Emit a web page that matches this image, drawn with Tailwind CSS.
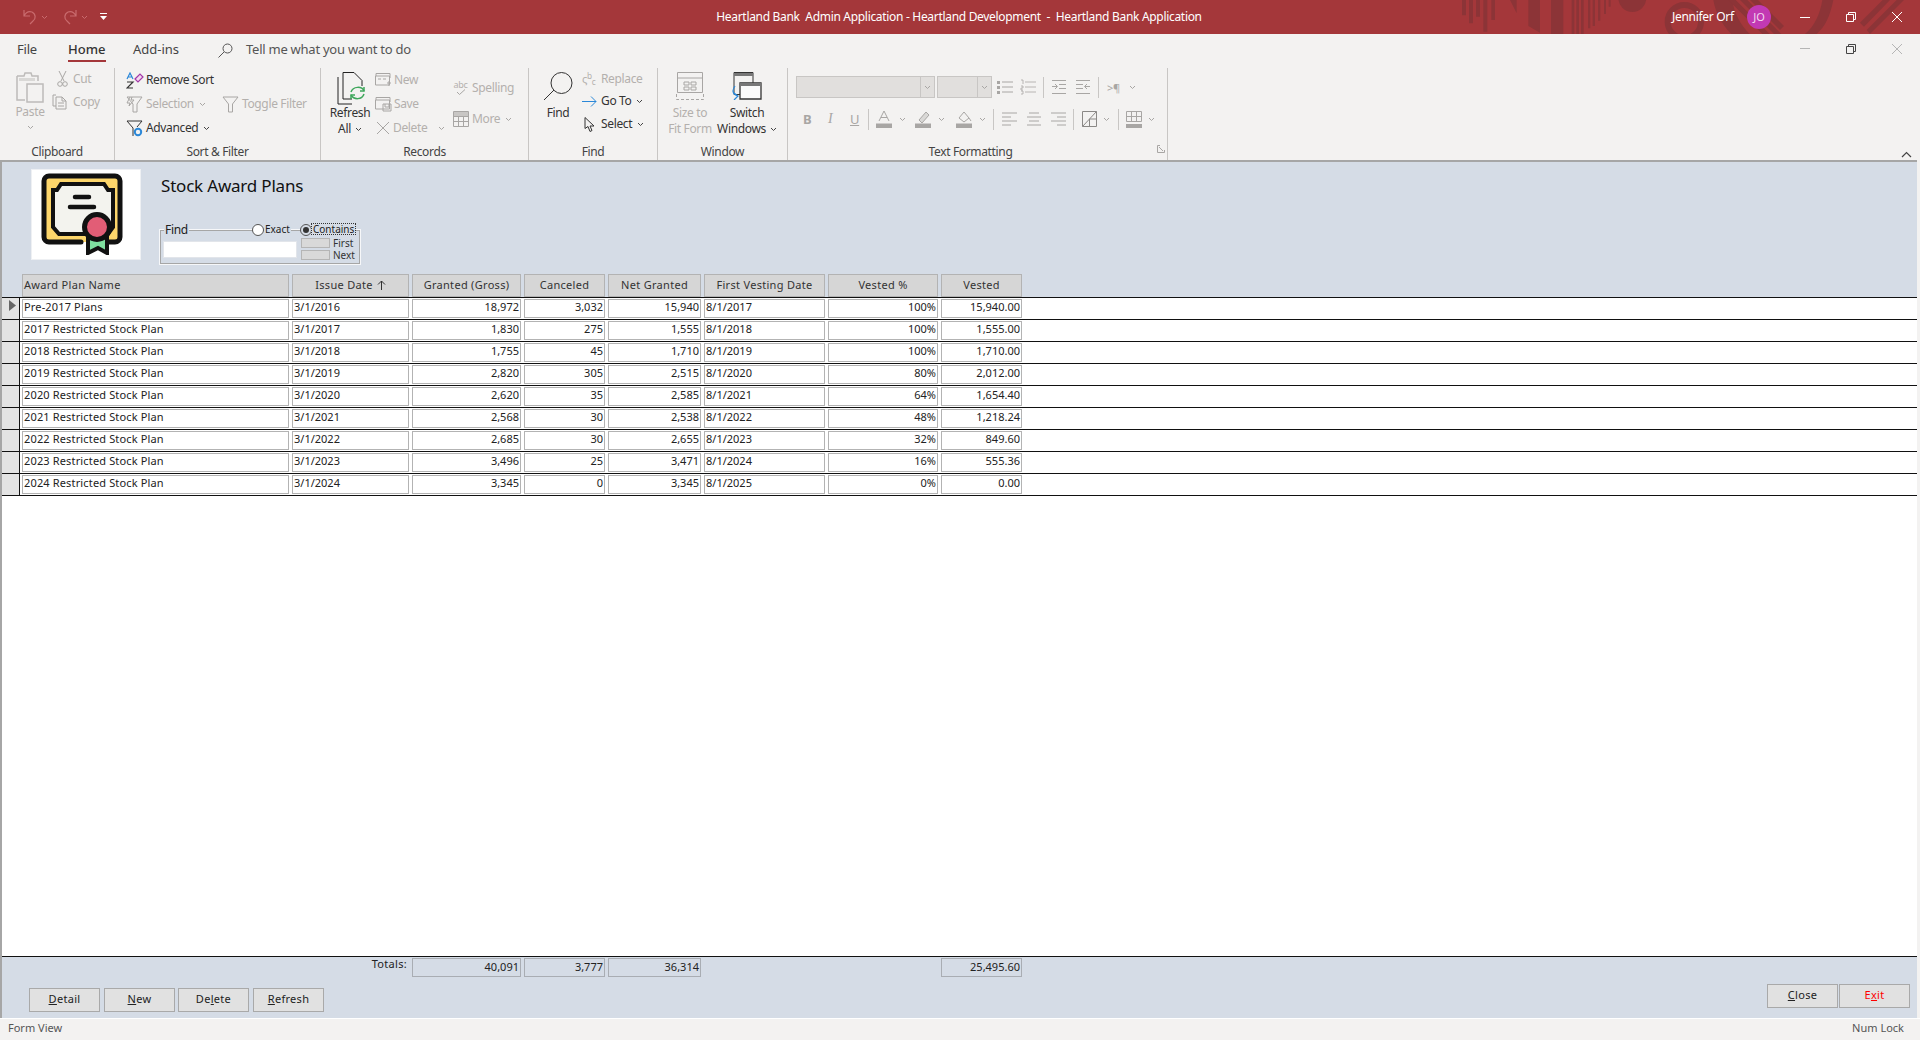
<!DOCTYPE html>
<html><head><meta charset="utf-8"><script src="https://cdn.jsdelivr.net/npm/@tailwindcss/browser@4"></script></head>
<body class="m-0 h-[1040px] w-[1920px] overflow-hidden bg-[#f3f2f1] font-['Noto_Sans','Open_Sans',sans-serif] text-[12px] text-[#444]">
<div class="flex h-[1040px] flex-col">

<!-- title bar -->
<header class="relative flex h-[34px] shrink-0 items-center bg-[#a4373a] text-white">
  <svg class="absolute left-[1400px] top-0" width="520" height="34" viewBox="0 0 1560 102" fill="#8c3437">
    <path d="M186 0h12v46h-12zM207 0h12v70h-12zM228 0h12v50h-12zM250 0h12v95h-12zM274 0h11v60h-11zM330 0h20v40zM385 0h35v98l-35-20zM453 0h37v102h-37zM515 0h8v102h-8zM529 0h8v102h-8zM543 0h8v102h-8zM564 0h7v85h-7zM578 0h7v78h-7zM594 0h7v62h-7zM612 0h6v42h-6zM626 0h6v20h-6z"/>
    <circle cx="697" cy="-6" r="42"/>
    <circle cx="853" cy="65" r="50" fill="none" stroke="#8c3437" stroke-width="18"/>
    <path d="M940 0h360c-10 50-25 80-50 102h-35c30-25 45-60 52-102h-270c5 40 25 75 52 102h-55c-30-30-48-65-54-102z"/>
    <path d="M985 0l102 102h22L1007 0zM1020 0l102 102h22L1042 0zM1050 0l90 90 12-12L1074 0zM1380 68l68-68h22l-78 80zM1400 90l90-90h22l-102 102z"/>
  </svg>
  <div class="relative flex w-[560px] items-center pl-[22px]">
    <svg width="16" height="16" viewBox="0 0 16 16" fill="none" stroke="#c96b6e" stroke-width="1.2"><path d="M2 1v6h6M2 7c2-4 5-5 8-4 4 2 4 7 1 9l-3 3"/></svg>
    <svg class="ml-[3px]" width="7" height="5" viewBox="0 0 7 5" fill="none" stroke="#c96b6e"><path d="M1 1l2.500 2.500L6 1"/></svg>
    <svg class="ml-[14px]" width="16" height="16" viewBox="0 0 16 16" fill="none" stroke="#c96b6e" stroke-width="1.2"><path d="M14 1v6H8M14 7c-2-4-5-5-8-4C2 5 2 10 5 12l3 3"/></svg>
    <svg class="ml-[3px]" width="7" height="5" viewBox="0 0 7 5" fill="none" stroke="#c96b6e"><path d="M1 1l2.500 2.500L6 1"/></svg>
    <svg class="ml-[12px]" width="8" height="8" viewBox="0 0 8 8" fill="#fff"><path d="M0 0h7v1H0zM0 3h7L3.500 7z"/></svg>
  </div>
  <div class="relative ml-[156px] w-[486px] whitespace-pre text-center text-[12px] tracking-[-0.31px]">Heartland Bank  Admin Application - Heartland Development  -  Heartland Bank Application</div>
  <div class="relative ml-[470px] w-[64px] whitespace-nowrap text-[12px] tracking-[-0.3px]">Jennifer Orf</div>
  <div class="relative ml-[11px] flex h-[24px] w-[24px] items-center justify-center rounded-full bg-[#c239b3] text-[11px] text-[#f3d9ef]">JO</div>
  <div class="relative ml-[29px] flex items-center">
    <svg width="10" height="10" viewBox="0 0 10 10" stroke="#fff"><path d="M0 5.500h10"/></svg>
    <svg class="ml-[36px]" width="10" height="10" viewBox="0 0 10 10" fill="none" stroke="#fff"><path d="M.5 2.500h7v7h-7zM2.500 2.500V.5h7v7H7.500"/></svg>
    <svg class="ml-[36px]" width="10" height="10" viewBox="0 0 10 10" fill="none" stroke="#fff"><path d="M0 0l10 10M10 0L0 10"/></svg>
  </div>
</header>

<!-- tabs -->
<nav class="flex h-[34px] shrink-0 items-start pt-[6px] text-[13px] text-[#444]">
  <span class="ml-[17px] w-[19px] tracking-[-0.2px]">File</span>
  <span class="relative ml-[32px] w-[38px] font-medium text-[#333]">Home<span class="absolute left-0 top-[20px] h-[2px] w-[38px] bg-[#a4373a]"></span></span>
  <span class="ml-[27px] w-[47px]">Add-ins</span>
  <svg class="ml-[38px] mt-[3px]" width="15" height="15" viewBox="0 0 15 15" fill="none" stroke="#555"><circle cx="9.500" cy="5.500" r="4.500"/><path d="M6 9l-5.500 5.500"/></svg>
  <span class="ml-[13px] whitespace-nowrap tracking-[-0.25px] text-[#555]">Tell me what you want to do</span>
  <div class="ml-auto mr-[18px] mt-[4px] flex items-center">
    <svg width="10" height="10" viewBox="0 0 10 10"><path d="M0 4.500h10" stroke="#b5b5b5"/></svg>
    <svg class="ml-[36px]" width="10" height="10" viewBox="0 0 10 10" fill="none" stroke="#444"><path d="M.5 2.500h7v7h-7zM2.500 2.500V.5h7v7H7.500"/></svg>
    <svg class="ml-[36px]" width="10" height="10" viewBox="0 0 10 10" fill="none" stroke="#b5b5b5"><path d="M0 0l10 10M10 0L0 10"/></svg>
  </div>
</nav>

<!-- ribbon -->
<section class="relative flex h-[92px] shrink-0 items-stretch text-[12px] leading-none tracking-[-0.35px]">
  <!-- Clipboard -->
  <div class="flex w-[115px] flex-col border-r border-[#c8c6c4]">
    <div class="flex h-[76px]">
      <div class="ml-[15px] flex w-[30px] flex-col items-center pt-[4px] text-[#b3b0ad]">
        <svg width="29" height="31" viewBox="0 0 29 31" fill="none" stroke="#bdbbb9"><path d="M1 4h7l1-3h6l1 3h6v5M1 4v24h8" stroke-width="1.500"/><path d="M11 12h16v18H11z" fill="#f3f2f1" stroke-width="1.500"/><path d="M3 6h16v3H3z" fill="#d9d8d6" stroke="none"/></svg>
        <span class="mt-[3px]">Paste</span>
        <svg class="mt-[7px]" width="7" height="5" viewBox="0 0 7 5" fill="none" stroke="#a8a6a4"><path d="M1 1l2.500 2.500L6 1"/></svg>
      </div>
      <div class="ml-[7px] flex flex-col text-[#b3b0ad]">
        <div class="flex h-[22px] items-center"><svg class="ml-[5px]" width="11" height="16" viewBox="0 0 11 16" fill="none" stroke="#a8a6a4"><path d="M2 0l5 10M9 0L4 10"/><circle cx="3" cy="13" r="2.300"/><circle cx="8" cy="13" r="2.300"/></svg><span class="ml-[5px]">Cut</span></div>
        <div class="mt-[1px] flex h-[22px] items-center"><svg width="16" height="16" viewBox="0 0 16 16" fill="none" stroke="#a8a6a4"><path d="M4 1H1v11h3M4 3h6l4 4v8H4zM10 3v4h4M6 9h6M6 12h6"/></svg><span class="ml-[5px]">Copy</span></div>
      </div>
    </div>
    <div class="mt-[2px] text-center text-[#444]">Clipboard</div>
  </div>
  <!-- Sort & Filter -->
  <div class="flex w-[206px] flex-col border-r border-[#c8c6c4]">
    <div class="flex h-[76px] flex-col pl-[11px]">
      <div class="flex h-[24px] items-center text-[#333]"><svg width="18" height="17" viewBox="0 0 18 17"><path d="M1 7l3-6 3 6M2 5h4" fill="none" stroke="#2b88d8" stroke-width="1.200"/><path d="M1 10h6l-6 6h6" fill="none" stroke="#333" stroke-width="1.200"/><path d="M9 7l5-5 3 3-5 5z" fill="#f3d9ef" stroke="#a238a8" stroke-width="1.200"/></svg><span class="ml-[2px] whitespace-nowrap">Remove Sort</span></div>
      <div class="flex h-[24px] items-center whitespace-nowrap text-[#b3b0ad]"><svg width="17" height="17" viewBox="0 0 17 17" fill="none" stroke="#a8a6a4"><path d="M1 1h15l-5 7v8H7V8zM4 1L1 7h3l-1 3 5-6H5l1-3"/></svg><span class="ml-[3px]">Selection</span><svg class="ml-[5px]" width="7" height="5" viewBox="0 0 7 5" fill="none" stroke="#a8a6a4"><path d="M1 1l2.500 2.500L6 1"/></svg>
        <svg class="ml-[16px]" width="17" height="17" viewBox="0 0 17 17" fill="none" stroke="#a8a6a4"><path d="M1 1h15l-5.500 7v8h-4V8z"/></svg><span class="ml-[3px]">Toggle Filter</span></div>
      <div class="flex h-[24px] items-center text-[#333]"><svg width="17" height="17" viewBox="0 0 17 17" fill="none" stroke="#333"><path d="M1 1h15l-5 6M7 16V8L1 1"/><circle cx="12" cy="12" r="3.200" stroke="#2b88d8" stroke-width="2"/></svg><span class="ml-[3px]">Advanced</span><svg class="ml-[5px]" width="7" height="5" viewBox="0 0 7 5" fill="none" stroke="#444"><path d="M1 1l2.500 2.500L6 1"/></svg></div>
    </div>
    <div class="mt-[2px] text-center text-[#444]">Sort &amp; Filter</div>
  </div>
  <!-- Records -->
  <div class="flex w-[208px] flex-col border-r border-[#c8c6c4]">
    <div class="flex h-[76px]">
      <div class="ml-[9px] flex w-[40px] flex-col items-center pt-[4px] text-[#333]">
        <svg class="ml-[4px]" width="30" height="33" viewBox="0 0 30 33" fill="none"><path d="M6 .5h11l8 8V14M6 .5V27h9M1 5v27h14" stroke="#222" /><path d="M14 20c2-6 11-6 13-1M27 22c-2 6-10 6-13 1" stroke="#3fa75c" stroke-width="1.500"/><path d="M27 15v4h-4M14 27v-4h4" stroke="#3fa75c" stroke-width="1.500"/></svg>
        <span class="mt-[2px]">Refresh</span>
        <span class="mt-[4px] flex items-center">All<svg class="ml-[4px]" width="7" height="5" viewBox="0 0 7 5" fill="none" stroke="#444"><path d="M1 1l2.500 2.500L6 1"/></svg></span>
      </div>
      <div class="ml-[5px] flex w-[73px] flex-col text-[#b3b0ad]">
        <div class="flex h-[24px] items-center"><svg width="17" height="15" viewBox="0 0 17 15" fill="none" stroke="#a8a6a4"><path d="M1 3V.5h14V5M.5 3h14v9H.5zM3 6h3M8 6h3M12 10h4M14 8v5"/></svg><span class="ml-[2px]">New</span></div>
        <div class="flex h-[24px] items-center"><svg width="17" height="15" viewBox="0 0 17 15" fill="none" stroke="#a8a6a4"><path d="M1 3V.5h14V5M.5 3h14v9H.5zM8 7h8v7H8zM10 7v3h4V7"/></svg><span class="ml-[2px]">Save</span></div>
        <div class="flex h-[24px] items-center"><svg class="ml-[1px]" width="14" height="14" viewBox="0 0 14 14" fill="none" stroke="#a8a6a4"><path d="M1 1l12 12M13 1L1 13"/></svg><span class="ml-[3px]">Delete</span><svg class="ml-[11px]" width="7" height="5" viewBox="0 0 7 5" fill="none" stroke="#a8a6a4"><path d="M1 1l2.500 2.500L6 1"/></svg></div>
      </div>
      <div class="ml-[5px] flex flex-col pt-[7px] text-[#b3b0ad]">
        <div class="flex h-[26px] items-center"><span class="flex w-[15px] flex-col items-center text-[9px] leading-[8px]">abc<svg width="10" height="6" viewBox="0 0 10 6" fill="none" stroke="#a8a6a4"><path d="M1 3l2.500 2.500L9 .5"/></svg></span><span class="ml-[4px]">Spelling</span></div>
        <div class="mt-[6px] flex h-[24px] items-center"><svg width="16" height="16" viewBox="0 0 16 16" fill="#f3f2f1" stroke="#a8a6a4"><path d="M.5.500h15v15H.5zM.5 5.500h15M.5 10.500h15M5.500 5.500v10M10.500 5.500v10"/><path d="M1 1h14v4H1z" fill="#c8c6c4" stroke="none"/></svg><span class="ml-[3px]">More</span><svg class="ml-[5px]" width="7" height="5" viewBox="0 0 7 5" fill="none" stroke="#a8a6a4"><path d="M1 1l2.500 2.500L6 1"/></svg></div>
      </div>
    </div>
    <div class="mt-[2px] text-center text-[#444]">Records</div>
  </div>
  <!-- Find -->
  <div class="flex w-[129px] flex-col border-r border-[#c8c6c4]">
    <div class="flex h-[76px]">
      <div class="ml-[14px] flex w-[30px] flex-col items-center pt-[4px] text-[#333]">
        <svg width="30" height="29" viewBox="0 0 30 29" fill="none" stroke="#333"><circle cx="18.500" cy="11" r="10.500"/><path d="M11 18L1 28"/></svg>
        <span class="mt-[6px]">Find</span>
      </div>
      <div class="ml-[9px] flex flex-col">
        <div class="flex h-[22px] items-center text-[#b3b0ad]"><span class="w-[15px] text-[11px] leading-[8px]">ς<sup>b</sup><sub>c</sub></span><span class="ml-[4px]">Replace</span></div>
        <div class="flex h-[22px] items-center text-[#333]"><svg width="15" height="11" viewBox="0 0 15 11" fill="none" stroke="#2b88d8"><path d="M0 5.500h14M9 .5l5 5-5 5"/></svg><span class="ml-[4px]">Go To</span><svg class="ml-[5px]" width="7" height="5" viewBox="0 0 7 5" fill="none" stroke="#444"><path d="M1 1l2.500 2.500L6 1"/></svg></div>
        <div class="flex h-[24px] items-center text-[#333]"><svg class="ml-[2px]" width="11" height="15" viewBox="0 0 11 15" fill="#f3f2f1" stroke="#333"><path d="M1 .5v11l3-2 2 5 2-1-2-4.500h4z"/></svg><span class="ml-[6px]">Select</span><svg class="ml-[5px]" width="7" height="5" viewBox="0 0 7 5" fill="none" stroke="#444"><path d="M1 1l2.500 2.500L6 1"/></svg></div>
      </div>
    </div>
    <div class="mt-[2px] text-center text-[#444]">Find</div>
  </div>
  <!-- Window -->
  <div class="flex w-[130px] flex-col border-r border-[#c8c6c4]">
    <div class="flex h-[76px] pt-[4px]">
      <div class="ml-[9px] flex w-[46px] flex-col items-center text-[#b3b0ad]">
        <svg width="28" height="28" viewBox="0 0 28 28" fill="none" stroke="#a8a6a4"><path d="M1.500 .5h25v20h-25z"/><path d="M1.500 6h25" /><path d="M8 10h5v3H8zM15 10h5v3h-5zM8 15h5v3H8zM15 15h5v3h-5z"/><path d="M.5 22v5.500h27V22" stroke-dasharray="3 2"/></svg>
        <span class="mt-[7px] whitespace-nowrap">Size to</span>
        <span class="mt-[4px] whitespace-nowrap">Fit Form</span>
      </div>
      <div class="ml-[5px] flex w-[58px] flex-col items-center text-[#333]">
        <svg width="31" height="28" viewBox="0 0 31 28" fill="none"><path d="M2 .5h19v22H2z" stroke="#333"/><path d="M2 1h19v3H2z" fill="#777"/><path d="M8 11h21v16H8z" fill="#fafafa" stroke="#333" stroke-width="1.300"/><path d="M8 11h21v3H8z" fill="#777"/><path d="M3 14c-3 4-3 8 3 10M2 21l4 3-4 4" stroke="#2b88d8" stroke-width="1.200"/></svg>
        <span class="mt-[7px]">Switch</span>
        <span class="mt-[4px] flex items-center whitespace-nowrap">Windows<svg class="ml-[4px]" width="7" height="5" viewBox="0 0 7 5" fill="none" stroke="#444"><path d="M1 1l2.500 2.500L6 1"/></svg></span>
      </div>
    </div>
    <div class="mt-[2px] text-center text-[#444]">Window</div>
  </div>
  <!-- Text formatting -->
  <div class="relative flex w-[380px] flex-col border-r border-[#c8c6c4]">
    <div class="flex h-[76px] flex-col pl-[8px] pt-[8px]">
      <div class="flex h-[22px] items-center">
        <div class="flex h-[22px] w-[139px] justify-end border border-[#c8c6c4] bg-[#e1dfdd]"><span class="flex w-[14px] items-center justify-center border-l border-[#c8c6c4]"><svg width="7" height="5" viewBox="0 0 7 5" fill="none" stroke="#a8a6a4"><path d="M1 1l2.500 2.500L6 1"/></svg></span></div>
        <div class="ml-[2px] flex h-[22px] w-[55px] justify-end border border-[#c8c6c4] bg-[#e1dfdd]"><span class="flex w-[14px] items-center justify-center border-l border-[#c8c6c4]"><svg width="7" height="5" viewBox="0 0 7 5" fill="none" stroke="#a8a6a4"><path d="M1 1l2.500 2.500L6 1"/></svg></span></div>
        <svg class="ml-[4px]" width="18" height="16" viewBox="0 0 18 16" fill="none" stroke="#a8a6a4"><path d="M6 3h11M6 8h11M6 13h11"/><path d="M1 2h3v3H1zM1 7h3v3H1zM1 12h3v3H1z" fill="#a8a6a4" stroke="none"/></svg>
        <svg class="ml-[6px]" width="16" height="16" viewBox="0 0 16 16" fill="none" stroke="#a8a6a4"><path d="M5 3h11M5 8h11M5 13h11M1 1h2v4M1 7h2v2H1v2h2M1 12h2v3H1"  stroke-width=".8"/></svg>
        <span class="ml-[7px] h-[21px] w-[1px] bg-[#c8c6c4]"></span>
        <svg class="ml-[7px]" width="16" height="16" viewBox="0 0 16 16" fill="none" stroke="#a8a6a4"><path d="M1 1.500h14M8 5.500h7M8 9.500h7M1 14.500h14M1 7.500h5M4 5l2.500 2.500L4 10"/></svg>
        <svg class="ml-[8px]" width="16" height="16" viewBox="0 0 16 16" fill="none" stroke="#a8a6a4"><path d="M1 1.500h14M1 5.500h7M1 9.500h7M1 14.500h14M10 7.500h5M12 5L9.500 7.500 12 10"/></svg>
        <span class="ml-[7px] h-[21px] w-[1px] bg-[#c8c6c4]"></span>
        <span class="ml-[8px] text-[11px] text-[#a8a6a4]">&gt;¶</span>
        <svg class="ml-[9px]" width="7" height="5" viewBox="0 0 7 5" fill="none" stroke="#a8a6a4"><path d="M1 1l2.500 2.500L6 1"/></svg>
      </div>
      <div class="mt-[9px] flex h-[24px] items-center text-[#a8a6a4]">
        <span class="ml-[7px] w-[10px] text-[13px] font-bold">B</span>
        <span class="ml-[15px] w-[8px] font-['Liberation_Serif'] text-[14px] italic">I</span>
        <span class="ml-[14px] w-[10px] text-[13px] underline">U</span>
        <span class="ml-[8px] h-[21px] w-[1px] bg-[#c8c6c4]"></span>
        <svg class="ml-[7px]" width="16" height="18" viewBox="0 0 16 18"><path d="M3 11L8 1l5 10M5 7.500h6" fill="none" stroke="#a8a6a4"/><path d="M0 13.500h16V18H0z" fill="#a8a6a4"/></svg>
        <svg class="ml-[7px]" width="7" height="5" viewBox="0 0 7 5" fill="none" stroke="#a8a6a4"><path d="M1 1l2.500 2.500L6 1"/></svg>
        <svg class="ml-[9px]" width="16" height="18" viewBox="0 0 16 18"><path d="M4 10l7-8 3 3-7 8z" fill="#d9d8d6" stroke="#a8a6a4"/><path d="M0 13.500h16V18H0z" fill="#a8a6a4"/></svg>
        <svg class="ml-[7px]" width="7" height="5" viewBox="0 0 7 5" fill="none" stroke="#a8a6a4"><path d="M1 1l2.500 2.500L6 1"/></svg>
        <svg class="ml-[11px]" width="16" height="18" viewBox="0 0 16 18"><path d="M3 8l5-6 5 6-5 4zM13 8l2 3" fill="none" stroke="#a8a6a4"/><path d="M0 13.500h16V18H0z" fill="#a8a6a4"/></svg>
        <svg class="ml-[7px]" width="7" height="5" viewBox="0 0 7 5" fill="none" stroke="#a8a6a4"><path d="M1 1l2.500 2.500L6 1"/></svg>
        <span class="ml-[7px] h-[21px] w-[1px] bg-[#c8c6c4]"></span>
        <svg class="ml-[8px]" width="15" height="14" viewBox="0 0 15 14" fill="none" stroke="#a8a6a4"><path d="M0 1h15M0 5h9M0 9h15M0 13h9"/></svg>
        <svg class="ml-[10px]" width="14" height="14" viewBox="0 0 14 14" fill="none" stroke="#a8a6a4"><path d="M2 1h10M0 5h14M2 9h10M0 13h14"/></svg>
        <svg class="ml-[10px]" width="15" height="14" viewBox="0 0 15 14" fill="none" stroke="#a8a6a4"><path d="M0 1h15M6 5h9M0 9h15M6 13h9"/></svg>
        <span class="ml-[7px] h-[21px] w-[1px] bg-[#c8c6c4]"></span>
        <svg class="ml-[8px]" width="15" height="16" viewBox="0 0 15 16" fill="none" stroke="#8a8886"><path d="M.5.500h14v15H.5zM.5 15.500L14.500.5M7.500 8v7.500M7.500 8h7"/></svg>
        <svg class="ml-[6px]" width="7" height="5" viewBox="0 0 7 5" fill="none" stroke="#a8a6a4"><path d="M1 1l2.500 2.500L6 1"/></svg>
        <span class="ml-[8px] h-[21px] w-[1px] bg-[#c8c6c4]"></span>
        <svg class="ml-[7px]" width="16" height="17" viewBox="0 0 16 17" fill="none" stroke="#a8a6a4"><path d="M.5.500h15v10H.5zM.5 5.500h15M5.500.5v10M10.500.5v10"/><path d="M0 13h16v4H0z" fill="#a8a6a4" stroke="none"/></svg>
        <svg class="ml-[6px]" width="7" height="5" viewBox="0 0 7 5" fill="none" stroke="#a8a6a4"><path d="M1 1l2.500 2.500L6 1"/></svg>
      </div>
    </div>
    <div class="mt-[2px] pr-[14px] text-center text-[#444]">Text Formatting</div>
    <svg class="absolute right-[2px] bottom-[7px]" width="8" height="8" viewBox="0 0 8 8" fill="none" stroke="#a8a6a4"><path d="M7.500 5v2.500H.5V.5H3M2 2l4 4"/></svg>
  </div>
  <svg class="absolute left-[1901px] bottom-[2px]" width="11" height="7" viewBox="0 0 11 7" fill="none" stroke="#444"><path d="M1 6l4.500-4.500L10 6" stroke-width="1.200"/></svg>
</section>

<!-- form -->
<main class="mr-[3px] flex min-h-0 flex-1 flex-col border-l-2 border-t-2 border-[#a6a6a6] font-['Noto_Sans','Open_Sans',sans-serif] text-[11px] text-[#222]">
  <!-- form header -->
  <div class="flex h-[135px] shrink-0 flex-col bg-[#d5dce6]">
    <div class="flex h-[110px] pt-[7px]">
      <div class="ml-[29px] flex h-[91px] w-[110px] items-start border border-[#eef0f3] bg-white pl-[9px] pt-[3px]">
        <svg width="82" height="82" viewBox="0 0 82 82">
          <path d="M40 69H8a5 5 0 0 1-5-5V8a5 5 0 0 1 5-5h66a5 5 0 0 1 5 5v56a5 5 0 0 1-5 5H68" fill="#fdd66b" stroke="#111" stroke-width="5" stroke-linecap="round"/>
          <path d="M20 11h43l4 6h5v37l-5 7H18l-6-7V17h4z" fill="#f3f3ee" stroke="#111" stroke-width="4"/>
          <path d="M34 24h14M29 34h24" stroke="#111" stroke-width="4.500" stroke-linecap="round"/>
          <path d="M47 62h19v18l-9-5-10 5z" fill="#7fe0a0" stroke="#111" stroke-width="4"/>
          <path d="M49 68h15" stroke="#7fe0a0" stroke-width="3"/>
          <circle cx="56" cy="54" r="12.500" fill="#e25d76" stroke="#111" stroke-width="5"/>
        </svg>
      </div>
      <div class="ml-[20px] flex flex-col">
        <h1 class="mt-[4px] text-[17px] font-normal leading-[25px] tracking-[-0.2px] text-[#111]">Stock Award Plans</h1>
        <div class="relative mt-[31px] ml-[-2px] h-[36px] w-[202px] shrink-0 border border-[#f6f7f9] shadow-[inset_0_0_0_1px_#a6a6a6]">
          <span class="absolute left-[4px] top-[-8px] bg-[#d5dce6] px-[1px] text-[12px] leading-[15px] tracking-[-0.3px] text-[#222]">Find</span>
          <span class="absolute left-[92px] top-[-6px] h-[12px] w-[12px] rounded-full border border-[#555] bg-white"></span>
          <span class="absolute left-[104px] top-[-7px] bg-[#d5dce6] px-[1px] text-[10px] leading-[13px]">Exact</span>
          <span class="absolute left-[140px] top-[-6px] flex h-[12px] w-[12px] items-center justify-center rounded-full border border-[#555] bg-[#d5dce6]"><span class="h-[6px] w-[6px] rounded-full bg-[#333]"></span></span>
          <span class="absolute left-[151px] top-[-7px] h-[12px] border border-dotted border-[#333] bg-[#d5dce6] px-[1px] text-[10px] leading-[10px]">Contains</span>
          <div class="ml-[3px] mt-[11px] flex">
            <div class="h-[17px] w-[134px] border border-[#e2e5ea] bg-white"></div>
            <div class="ml-[4px] mt-[-3px] flex flex-col gap-[2px] text-[10px] leading-[10px] text-[#333]">
              <div class="flex items-center"><span class="h-[10px] w-[29px] border border-[#b5b5b5] bg-[#d9d9d9]"></span><span class="ml-[3px]">First</span></div>
              <div class="flex items-center"><span class="h-[10px] w-[29px] border border-[#b5b5b5] bg-[#d9d9d9]"></span><span class="ml-[3px]">Next</span></div>
            </div>
          </div>
        </div>
      </div>
    </div>
    <div class="mt-[2px] ml-[20px] grid h-[23px] grid-cols-[267px_117px_109px_81px_93px_121px_110px_81px] gap-x-[3px] text-[11px] tracking-[0.3px] text-[#333]">
      <div class="flex items-center border border-[#b3b3b3] bg-[#d6d6d6] pb-[1px] pl-[1px]">Award Plan Name</div>
      <div class="flex items-center justify-center border border-[#b3b3b3] bg-[#d6d6d6] pb-[1px]">Issue Date<svg class="ml-[4px]" width="9" height="10" viewBox="0 0 9 10" fill="none" stroke="#333"><path d="M4.500 10V1M1 4.500L4.500 1 8 4.500"/></svg></div>
      <div class="flex items-center justify-center border border-[#b3b3b3] bg-[#d6d6d6] pb-[1px]">Granted (Gross)</div>
      <div class="flex items-center justify-center border border-[#b3b3b3] bg-[#d6d6d6] pb-[1px]">Canceled</div>
      <div class="flex items-center justify-center border border-[#b3b3b3] bg-[#d6d6d6] pb-[1px]">Net Granted</div>
      <div class="flex items-center justify-center border border-[#b3b3b3] bg-[#d6d6d6] pb-[1px]">First Vesting Date</div>
      <div class="flex items-center justify-center border border-[#b3b3b3] bg-[#d6d6d6] pb-[1px]">Vested %</div>
      <div class="flex items-center justify-center border border-[#b3b3b3] bg-[#d6d6d6] pb-[1px]">Vested</div>
    </div>
  </div>

  <!-- detail rows -->
  <div class="min-h-0 flex-1 bg-white">
    <div class="flex h-[22px] border-t-[1.5px] border-[#111]"><div class="flex h-full w-[18px] items-start border-r-[1.5px] border-[#111] bg-[#e3e3e3] pl-[7px] pt-[2px]"><svg width="7" height="11" viewBox="0 0 7 11" fill="#666"><path d="M0 0l7 5.500L0 11z"/></svg></div><div class="ml-[2px] mt-[1px] grid h-[19px] grid-cols-[267px_117px_109px_81px_93px_121px_110px_81px] gap-x-[3px]"><div class="border border-[#b3b3b3] pl-[1px] leading-[14px] tracking-[0.15px]">Pre-2017 Plans</div><div class="border border-[#b3b3b3] pl-[1px] leading-[14px]">3/1/2016</div><div class="border border-[#b3b3b3] pr-[1px] text-right leading-[14px]">18,972</div><div class="border border-[#b3b3b3] pr-[1px] text-right leading-[14px]">3,032</div><div class="border border-[#b3b3b3] pr-[1px] text-right leading-[14px]">15,940</div><div class="border border-[#b3b3b3] pl-[1px] leading-[14px]">8/1/2017</div><div class="border border-[#b3b3b3] pr-[1px] text-right leading-[14px]">100%</div><div class="border border-[#b3b3b3] pr-[1px] text-right leading-[14px]">15,940.00</div></div></div>
    <div class="flex h-[22px] border-t-[1.5px] border-[#111]"><div class="h-full w-[18px] border-r-[1.5px] border-[#111] bg-[#e3e3e3]"></div><div class="ml-[2px] mt-[1px] grid h-[19px] grid-cols-[267px_117px_109px_81px_93px_121px_110px_81px] gap-x-[3px]"><div class="border border-[#b3b3b3] pl-[1px] leading-[14px] tracking-[0.15px]">2017 Restricted Stock Plan</div><div class="border border-[#b3b3b3] pl-[1px] leading-[14px]">3/1/2017</div><div class="border border-[#b3b3b3] pr-[1px] text-right leading-[14px]">1,830</div><div class="border border-[#b3b3b3] pr-[1px] text-right leading-[14px]">275</div><div class="border border-[#b3b3b3] pr-[1px] text-right leading-[14px]">1,555</div><div class="border border-[#b3b3b3] pl-[1px] leading-[14px]">8/1/2018</div><div class="border border-[#b3b3b3] pr-[1px] text-right leading-[14px]">100%</div><div class="border border-[#b3b3b3] pr-[1px] text-right leading-[14px]">1,555.00</div></div></div>
    <div class="flex h-[22px] border-t-[1.5px] border-[#111]"><div class="h-full w-[18px] border-r-[1.5px] border-[#111] bg-[#e3e3e3]"></div><div class="ml-[2px] mt-[1px] grid h-[19px] grid-cols-[267px_117px_109px_81px_93px_121px_110px_81px] gap-x-[3px]"><div class="border border-[#b3b3b3] pl-[1px] leading-[14px] tracking-[0.15px]">2018 Restricted Stock Plan</div><div class="border border-[#b3b3b3] pl-[1px] leading-[14px]">3/1/2018</div><div class="border border-[#b3b3b3] pr-[1px] text-right leading-[14px]">1,755</div><div class="border border-[#b3b3b3] pr-[1px] text-right leading-[14px]">45</div><div class="border border-[#b3b3b3] pr-[1px] text-right leading-[14px]">1,710</div><div class="border border-[#b3b3b3] pl-[1px] leading-[14px]">8/1/2019</div><div class="border border-[#b3b3b3] pr-[1px] text-right leading-[14px]">100%</div><div class="border border-[#b3b3b3] pr-[1px] text-right leading-[14px]">1,710.00</div></div></div>
    <div class="flex h-[22px] border-t-[1.5px] border-[#111]"><div class="h-full w-[18px] border-r-[1.5px] border-[#111] bg-[#e3e3e3]"></div><div class="ml-[2px] mt-[1px] grid h-[19px] grid-cols-[267px_117px_109px_81px_93px_121px_110px_81px] gap-x-[3px]"><div class="border border-[#b3b3b3] pl-[1px] leading-[14px] tracking-[0.15px]">2019 Restricted Stock Plan</div><div class="border border-[#b3b3b3] pl-[1px] leading-[14px]">3/1/2019</div><div class="border border-[#b3b3b3] pr-[1px] text-right leading-[14px]">2,820</div><div class="border border-[#b3b3b3] pr-[1px] text-right leading-[14px]">305</div><div class="border border-[#b3b3b3] pr-[1px] text-right leading-[14px]">2,515</div><div class="border border-[#b3b3b3] pl-[1px] leading-[14px]">8/1/2020</div><div class="border border-[#b3b3b3] pr-[1px] text-right leading-[14px]">80%</div><div class="border border-[#b3b3b3] pr-[1px] text-right leading-[14px]">2,012.00</div></div></div>
    <div class="flex h-[22px] border-t-[1.5px] border-[#111]"><div class="h-full w-[18px] border-r-[1.5px] border-[#111] bg-[#e3e3e3]"></div><div class="ml-[2px] mt-[1px] grid h-[19px] grid-cols-[267px_117px_109px_81px_93px_121px_110px_81px] gap-x-[3px]"><div class="border border-[#b3b3b3] pl-[1px] leading-[14px] tracking-[0.15px]">2020 Restricted Stock Plan</div><div class="border border-[#b3b3b3] pl-[1px] leading-[14px]">3/1/2020</div><div class="border border-[#b3b3b3] pr-[1px] text-right leading-[14px]">2,620</div><div class="border border-[#b3b3b3] pr-[1px] text-right leading-[14px]">35</div><div class="border border-[#b3b3b3] pr-[1px] text-right leading-[14px]">2,585</div><div class="border border-[#b3b3b3] pl-[1px] leading-[14px]">8/1/2021</div><div class="border border-[#b3b3b3] pr-[1px] text-right leading-[14px]">64%</div><div class="border border-[#b3b3b3] pr-[1px] text-right leading-[14px]">1,654.40</div></div></div>
    <div class="flex h-[22px] border-t-[1.5px] border-[#111]"><div class="h-full w-[18px] border-r-[1.5px] border-[#111] bg-[#e3e3e3]"></div><div class="ml-[2px] mt-[1px] grid h-[19px] grid-cols-[267px_117px_109px_81px_93px_121px_110px_81px] gap-x-[3px]"><div class="border border-[#b3b3b3] pl-[1px] leading-[14px] tracking-[0.15px]">2021 Restricted Stock Plan</div><div class="border border-[#b3b3b3] pl-[1px] leading-[14px]">3/1/2021</div><div class="border border-[#b3b3b3] pr-[1px] text-right leading-[14px]">2,568</div><div class="border border-[#b3b3b3] pr-[1px] text-right leading-[14px]">30</div><div class="border border-[#b3b3b3] pr-[1px] text-right leading-[14px]">2,538</div><div class="border border-[#b3b3b3] pl-[1px] leading-[14px]">8/1/2022</div><div class="border border-[#b3b3b3] pr-[1px] text-right leading-[14px]">48%</div><div class="border border-[#b3b3b3] pr-[1px] text-right leading-[14px]">1,218.24</div></div></div>
    <div class="flex h-[22px] border-t-[1.5px] border-[#111]"><div class="h-full w-[18px] border-r-[1.5px] border-[#111] bg-[#e3e3e3]"></div><div class="ml-[2px] mt-[1px] grid h-[19px] grid-cols-[267px_117px_109px_81px_93px_121px_110px_81px] gap-x-[3px]"><div class="border border-[#b3b3b3] pl-[1px] leading-[14px] tracking-[0.15px]">2022 Restricted Stock Plan</div><div class="border border-[#b3b3b3] pl-[1px] leading-[14px]">3/1/2022</div><div class="border border-[#b3b3b3] pr-[1px] text-right leading-[14px]">2,685</div><div class="border border-[#b3b3b3] pr-[1px] text-right leading-[14px]">30</div><div class="border border-[#b3b3b3] pr-[1px] text-right leading-[14px]">2,655</div><div class="border border-[#b3b3b3] pl-[1px] leading-[14px]">8/1/2023</div><div class="border border-[#b3b3b3] pr-[1px] text-right leading-[14px]">32%</div><div class="border border-[#b3b3b3] pr-[1px] text-right leading-[14px]">849.60</div></div></div>
    <div class="flex h-[22px] border-t-[1.5px] border-[#111]"><div class="h-full w-[18px] border-r-[1.5px] border-[#111] bg-[#e3e3e3]"></div><div class="ml-[2px] mt-[1px] grid h-[19px] grid-cols-[267px_117px_109px_81px_93px_121px_110px_81px] gap-x-[3px]"><div class="border border-[#b3b3b3] pl-[1px] leading-[14px] tracking-[0.15px]">2023 Restricted Stock Plan</div><div class="border border-[#b3b3b3] pl-[1px] leading-[14px]">3/1/2023</div><div class="border border-[#b3b3b3] pr-[1px] text-right leading-[14px]">3,496</div><div class="border border-[#b3b3b3] pr-[1px] text-right leading-[14px]">25</div><div class="border border-[#b3b3b3] pr-[1px] text-right leading-[14px]">3,471</div><div class="border border-[#b3b3b3] pl-[1px] leading-[14px]">8/1/2024</div><div class="border border-[#b3b3b3] pr-[1px] text-right leading-[14px]">16%</div><div class="border border-[#b3b3b3] pr-[1px] text-right leading-[14px]">555.36</div></div></div>
    <div class="flex h-[23px] border-y-[1.5px] border-[#111]"><div class="h-full w-[18px] border-r-[1.5px] border-[#111] bg-[#e3e3e3]"></div><div class="ml-[2px] mt-[1px] grid h-[18.5px] grid-cols-[267px_117px_109px_81px_93px_121px_110px_81px] gap-x-[3px]"><div class="border border-[#b3b3b3] pl-[1px] leading-[14px] tracking-[0.15px]">2024 Restricted Stock Plan</div><div class="border border-[#b3b3b3] pl-[1px] leading-[14px]">3/1/2024</div><div class="border border-[#b3b3b3] pr-[1px] text-right leading-[14px]">3,345</div><div class="border border-[#b3b3b3] pr-[1px] text-right leading-[14px]">0</div><div class="border border-[#b3b3b3] pr-[1px] text-right leading-[14px]">3,345</div><div class="border border-[#b3b3b3] pl-[1px] leading-[14px]">8/1/2025</div><div class="border border-[#b3b3b3] pr-[1px] text-right leading-[14px]">0%</div><div class="border border-[#b3b3b3] pr-[1px] text-right leading-[14px]">0.00</div></div></div>
  </div>

  <!-- form footer -->
  <div class="flex h-[62px] shrink-0 flex-col border-t-[1.5px] border-[#111] bg-[#d5dce6]">
    <div class="relative ml-[20px] mt-[1px] grid h-[19px] grid-cols-[267px_117px_109px_81px_93px_121px_110px_81px] gap-x-[3px] text-right">
      <div class="col-start-2 pr-[2px] leading-[12px] tracking-[0.3px]">Totals:</div>
      <div class="col-start-3 border border-[#a9adb3] pr-[1px] leading-[15px]">40,091</div>
      <div class="border border-[#a9adb3] pr-[1px] leading-[15px]">3,777</div>
      <div class="border border-[#a9adb3] pr-[1px] leading-[15px]">36,314</div>
      <div class="col-start-8 border border-[#a9adb3] pr-[1px] leading-[15px]">25,495.60</div>
    </div>
    <div class="flex items-start pl-[27px] tracking-[0.3px]">
      <div class="mt-[11px] flex h-[24px] w-[71px] items-center justify-center border border-[#a9a9a9] bg-[#e1e1e1] pb-[2px]"><span><u>D</u>etail</span></div>
      <div class="ml-[4px] mt-[11px] flex h-[24px] w-[71px] items-center justify-center border border-[#a9a9a9] bg-[#e1e1e1] pb-[2px]"><span><u>N</u>ew</span></div>
      <div class="ml-[3px] mt-[11px] flex h-[24px] w-[71px] items-center justify-center border border-[#a9a9a9] bg-[#e1e1e1] pb-[2px]"><span>De<u>l</u>ete</span></div>
      <div class="ml-[4px] mt-[11px] flex h-[24px] w-[71px] items-center justify-center border border-[#a9a9a9] bg-[#e1e1e1] pb-[2px]"><span><u>R</u>efresh</span></div>
      <div class="ml-auto mr-[7px] mt-[7px] flex gap-[1px]">
        <div class="flex h-[24px] w-[71px] items-center justify-center border border-[#a9a9a9] bg-[#e1e1e1] pb-[2px]"><span><u>C</u>lose</span></div>
        <div class="flex h-[24px] w-[71px] items-center justify-center border border-[#a9a9a9] bg-[#e1e1e1] pb-[2px] text-[#ff0000]"><span>E<u>x</u>it</span></div>
      </div>
    </div>
  </div>
</main>

<!-- status bar -->
<footer class="flex h-[22px] shrink-0 items-center justify-between border-t border-white pb-[2px] pl-[8px] pr-[16px] text-[11px] text-[#555]">
  <span>Form View</span><span>Num Lock</span>
</footer>
</div>
</body></html>
